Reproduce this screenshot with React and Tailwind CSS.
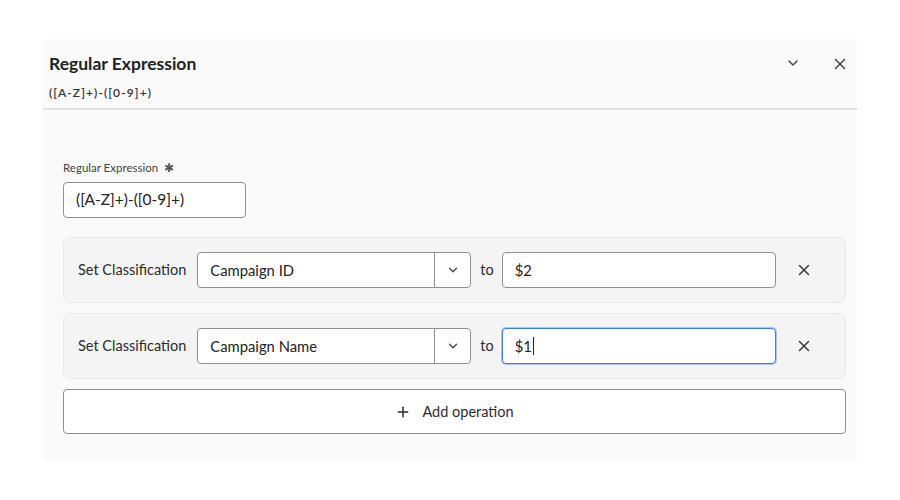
import React, { useState } from 'react';
import { ChevronDown, X, Plus } from 'lucide-react';

const ruleRows = [
    { id: 1, column: 'Campaign ID', value: '$2', focused: false },
    { id: 2, column: 'Campaign Name', value: '$1', focused: true },
];

const OperationRow = ({ row }) => (
    <div className="flex items-center h-[66px] px-[14px] bg-[#f4f4f4] border border-[#e8e8e8] rounded-[7px]">
        <span className="text-[14.5px] text-[#2c2c2c] mr-[11px]">Set Classification</span>
        <div className="flex h-[36px] w-[274px] bg-white border border-[#909090] rounded-[4px]">
            <span className="flex-1 flex items-center pl-[12px] text-[14.8px] text-[#222]">{row.column}</span>
            <span className="w-[36px] flex items-center justify-center border-l border-[#909090] text-[#444]">
                <ChevronDown size={14} strokeWidth={2.25} />
            </span>
        </div>
        <span className="text-[14.5px] text-[#2c2c2c] ml-[9px] mr-[8px]">to</span>
        <div
            className={`flex items-center h-[36px] w-[274px] pl-[12px] bg-white rounded-[4px] text-[14.8px] text-[#222] ${row.focused ? 'border border-[#3d7cf0] ring-1 ring-[#a9c4f5]' : 'border border-[#909090]'}`}
        >
            {row.value}
            {row.focused && <span className="w-px h-[18px] bg-[#222] ml-px" />}
        </div>
        <button className="ml-[19px] text-[#3a3a3a]">
            <X size={18} strokeWidth={2} />
        </button>
    </div>
);

const App = () => {
    const [pattern] = useState('([A-Z]+)-([0-9]+)');

    return (
        <div className="w-[900px] h-[500px] bg-white pt-[39px] pl-[43px]" style={{ fontFamily: 'Lato, "Open Sans", sans-serif' }}>
            <div className="w-[814px] h-[421px] bg-[#fafafa]">
                {/* Header */}
                <div className="flex justify-between h-[71px] pl-[6px] pr-[8px] pt-[14px] border-b-2 border-[#e4e4e4]">
                    <div>
                        <h2 className="text-[17.5px] font-bold text-[#222] leading-[21px]">Regular Expression</h2>
                        <p className="mt-[11px] text-[12px] font-semibold tracking-[1.1px] text-[#333] leading-[15px]">{pattern}</p>
                    </div>
                    <div className="flex items-start gap-[30px] text-[#444] pt-[2px]">
                        <ChevronDown size={16} strokeWidth={2.25} />
                        <X size={18} strokeWidth={2} />
                    </div>
                </div>

                {/* Body */}
                <div className="pt-[51px] pl-[20px] pr-[11px]">
                    <label className="block text-[11.5px] text-[#444] leading-[14px]">
                        Regular Expression <span className="ml-[3px] text-[#555]">✱</span>
                    </label>
                    <div className="mt-[7px] flex items-center w-[183px] h-[36px] pl-[12px] bg-white border border-[#909090] rounded-[4px] text-[15.5px] text-[#222]">
                        {pattern}
                    </div>

                    <div className="mt-[19px] flex flex-col gap-[10px]">
                        {ruleRows.map((row) => (
                            <OperationRow key={row.id} row={row} />
                        ))}
                        <button className="flex items-center justify-center gap-[11px] h-[45px] bg-white border border-[#8e8e8e] rounded-[4px] text-[14.5px] text-[#2c2c2c]">
                            <Plus size={16} strokeWidth={2.25} />
                            Add operation
                        </button>
                    </div>
                </div>
            </div>
        </div>
    );
};

export default App;
